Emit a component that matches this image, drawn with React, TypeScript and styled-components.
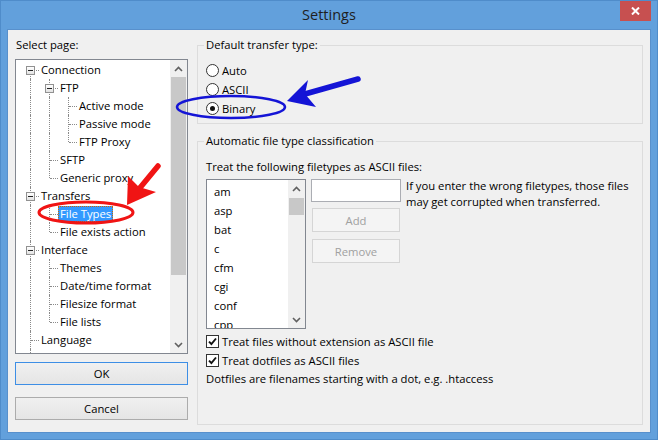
import React from 'react';
import styled, { createGlobalStyle, css } from 'styled-components';

const FONT = `"Open Sans", "Noto Sans", "DejaVu Sans", sans-serif`;

const GlobalStyle = createGlobalStyle`
  html, body { margin: 0; padding: 0; }
  body { background: #62a0dc; font-family: ${FONT}; font-size: 11.25px; color: #000; }
  * { box-sizing: border-box; }
`;

const Window = styled.div`
  position: relative;
  width: 658px;
  height: 440px;
  background: #62a0dc;
  display: flex;
  flex-direction: column;
  box-shadow: inset 0 0 0 1px #4f8cca;
  overflow: hidden;
`;

const TitleBar = styled.div`
  height: 30px;
  flex: none;
  display: grid;
  grid-template-columns: 1fr auto 1fr;
`;

const Title = styled.div`
  grid-column: 2;
  align-self: center;
  font-size: 14.5px;
  line-height: 20px;
  color: #1e1e1e;
  margin-top: -1px;
`;

const CloseButton = styled.div`
  grid-column: 3;
  justify-self: end;
  align-self: start;
  width: 31px;
  height: 20px;
  margin: 1px 7px 0 0;
  background: #c75050;
  display: flex;
  align-items: center;
  justify-content: center;
`;

const Client = styled.div`
  flex: 1;
  margin: 0 8px 8px;
  background: #f0f0f0;
  display: flex;
  gap: 9px;
  padding: 6px 7px 7px;
  box-shadow: 0 0 0 1px #5890cc;
`;

const LeftPane = styled.div`
  width: 173px;
  flex: none;
  display: flex;
  flex-direction: column;
  padding-bottom: 5px;
`;

const PaneLabel = styled.div`
  height: 16px;
  line-height: 16px;
  margin: 1px 0 6px;
  padding-left: 1px;
`;

const TreeBox = styled.div`
  height: 295px;
  flex: none;
  border: 1px solid #828790;
  background: #fff;
  display: flex;
  overflow: hidden;
`;

const TreeItems = styled.div`
  flex: 1;
  padding: 1px 0 0 7px;
  overflow: hidden;
`;

const TreeRow = styled.div`
  display: flex;
  height: 18px;
`;

const TreeTail = styled.div`
  height: 18px;
  width: 16px;
  position: relative;
  &::before {
    content: '';
    position: absolute;
    left: 7px;
    top: 0;
    bottom: 0;
    border-left: 1px dotted #8a8a8a;
  }
`;

const dotted = '1px dotted #8a8a8a';

const Guide = styled.div<{ $line: boolean }>`
  width: 19px;
  flex: none;
  position: relative;
  ${(p) =>
    p.$line &&
    css`
      &::before {
        content: '';
        position: absolute;
        left: 7px;
        top: 0;
        bottom: 0;
        border-left: ${dotted};
      }
    `}
`;

const Elbow = styled.div<{ $top: boolean; $bottom: boolean }>`
  width: 16px;
  flex: none;
  position: relative;
  &::before {
    content: '';
    position: absolute;
    left: 7px;
    top: ${(p) => (p.$top ? '0' : '9px')};
    bottom: ${(p) => (p.$bottom ? '0' : '9px')};
    border-left: ${dotted};
  }
  &::after {
    content: '';
    position: absolute;
    left: 8px;
    right: 0;
    top: 9px;
    border-top: ${dotted};
  }
`;

const Expander = styled.span`
  position: absolute;
  z-index: 1;
  left: 3px;
  top: 5px;
  width: 9px;
  height: 9px;
  border: 1px solid #919191;
  background: linear-gradient(#ffffff, #e2e2e2);
  &::after {
    content: '';
    position: absolute;
    left: 1px;
    top: 3px;
    width: 5px;
    height: 1px;
    background: #222;
  }
`;

const NodeLabel = styled.span<{ $selected?: boolean }>`
  height: 16px;
  line-height: 16px;
  margin-top: 1px;
  padding: 0 2px;
  white-space: nowrap;
  ${(p) =>
    p.$selected &&
    css`
      background: #3399ff;
      color: #fff;
      outline: 1px dotted #cc6600;
      outline-offset: -1px;
    `}
`;

const ScrollBar = styled.div`
  width: 17px;
  flex: none;
  background: #f0f0f0;
  display: flex;
  flex-direction: column;
`;

const ScrollArrow = styled.div`
  height: 17px;
  flex: none;
  display: flex;
  align-items: center;
  justify-content: center;
`;

const ScrollTrack = styled.div`
  flex: 1;
  display: flex;
  flex-direction: column;
`;

const ScrollThumb = styled.div<{ $size: number; $offset: number }>`
  height: ${(p) => p.$size}px;
  margin: ${(p) => p.$offset}px 1px 0 1px;
  background: #c8c8c8;
`;

const Button = styled.button<{ $default?: boolean }>`
  display: block;
  width: 100%;
  height: 23px;
  margin: 0;
  padding: 0;
  font: inherit;
  color: #000;
  border: 1px solid ${(p) => (p.$default ? '#3d8ee5' : '#acacac')};
  background: linear-gradient(#f0f0f0, #e5e5e5);
`;

const OkButton = styled(Button)`
  margin-top: 8px;
`;

const CancelButton = styled(Button)`
  margin-top: 12px;
`;

const RightPane = styled.div`
  flex: 1;
  min-width: 0;
  display: flex;
  flex-direction: column;
  padding-top: 1px;
`;

const Group = styled.fieldset<{ $grow?: boolean }>`
  margin: 0;
  min-width: 0;
  border: 1px solid #dcdcdc;
  padding: 8px 8px 5px;
  ${(p) =>
    p.$grow &&
    css`
      flex: 1;
      margin-top: 9px;
      padding-top: 10px;
    `}
`;

const GroupTitle = styled.legend`
  padding: 0 2px;
  margin-left: -2px;
  height: 16px;
  line-height: 16px;
`;

const OptionRow = styled.div`
  display: flex;
  align-items: center;
  height: 19px;
  gap: 3px;
  white-space: nowrap;
`;

const OptionText = styled.span`
  line-height: 16px;
  height: 16px;
`;

const RadioMark = styled.span<{ $checked?: boolean }>`
  width: 13px;
  height: 13px;
  flex: none;
  border-radius: 50%;
  border: 1px solid #333;
  background: #fff;
  display: flex;
  align-items: center;
  justify-content: center;
  ${(p) =>
    p.$checked &&
    css`
      &::after {
        content: '';
        width: 5px;
        height: 5px;
        border-radius: 50%;
        background: #111;
      }
    `}
`;

const CheckMark = styled.span`
  width: 13px;
  height: 13px;
  flex: none;
  border: 1px solid #333;
  background: #fff;
  display: flex;
  align-items: center;
  justify-content: center;
`;

const TextLine = styled.div<{ $gap?: number }>`
  height: 16px;
  line-height: 16px;
  white-space: nowrap;
  margin-top: ${(p) => p.$gap ?? 0}px;
`;

const FileRow = styled.div`
  display: flex;
  gap: 5px;
  margin-top: 4px;
`;

const ListBox = styled.div`
  width: 100px;
  height: 150px;
  flex: none;
  border: 1px solid #828790;
  background: #fff;
  display: flex;
  overflow: hidden;
`;

const ListItems = styled.div`
  flex: 1;
  padding: 2px 0 0 7px;
  overflow: hidden;
`;

const ListItem = styled.div`
  height: 19px;
  line-height: 19px;
`;

const SideColumn = styled.div`
  width: 90px;
  flex: none;
  display: flex;
  flex-direction: column;
`;

const TextInput = styled.input`
  width: 90px;
  height: 23px;
  margin: 0;
  padding: 0 3px;
  border: 1px solid #abadb3;
  background: #fff;
  font: inherit;
  outline: none;
`;

const SideButton = styled.button<{ $gap: number }>`
  height: 24px;
  margin: ${(p) => p.$gap}px 1px 0;
  padding: 0;
  font: inherit;
  color: #a0a0a0;
  border: 1px solid #d5d5d5;
  background: #f4f4f4;
`;

const Hint = styled.div`
  flex: 1;
  line-height: 16px;
  margin-top: -1px;
`;

const ChecksBlock = styled.div`
  margin-top: 3px;
`;

const Overlay = styled.svg`
  position: absolute;
  left: 0;
  top: 0;
  width: 658px;
  height: 440px;
  pointer-events: none;
`;

const ChevronUp = () => (
  <svg width="9" height="6" viewBox="0 0 9 6">
    <path d="M1 5 L4.5 1.5 L8 5" fill="none" stroke="#606060" strokeWidth="1.6" />
  </svg>
);

const ChevronDown = () => (
  <svg width="9" height="6" viewBox="0 0 9 6">
    <path d="M1 1 L4.5 4.5 L8 1" fill="none" stroke="#606060" strokeWidth="1.6" />
  </svg>
);

type Node = {
  label: string;
  guides: boolean[];
  top: boolean;
  bottom: boolean;
  expander?: boolean;
  selected?: boolean;
};

const nodes: Node[] = [
  { label: 'Connection', guides: [], top: false, bottom: true, expander: true },
  { label: 'FTP', guides: [true], top: true, bottom: true, expander: true },
  { label: 'Active mode', guides: [true, true], top: true, bottom: true },
  { label: 'Passive mode', guides: [true, true], top: true, bottom: true },
  { label: 'FTP Proxy', guides: [true, true], top: true, bottom: false },
  { label: 'SFTP', guides: [true], top: true, bottom: true },
  { label: 'Generic proxy', guides: [true], top: true, bottom: false },
  { label: 'Transfers', guides: [], top: true, bottom: true, expander: true },
  { label: 'File Types', guides: [true], top: true, bottom: true, selected: true },
  { label: 'File exists action', guides: [true], top: true, bottom: false },
  { label: 'Interface', guides: [], top: true, bottom: true, expander: true },
  { label: 'Themes', guides: [true], top: true, bottom: true },
  { label: 'Date/time format', guides: [true], top: true, bottom: true },
  { label: 'Filesize format', guides: [true], top: true, bottom: true },
  { label: 'File lists', guides: [true], top: true, bottom: false },
  { label: 'Language', guides: [], top: true, bottom: true },
];

const fileTypes = ['am', 'asp', 'bat', 'c', 'cfm', 'cgi', 'conf', 'cpp'];

const Radio = ({ label, checked }: { label: string; checked?: boolean }) => (
  <OptionRow>
    <RadioMark $checked={checked} />
    <OptionText>{label}</OptionText>
  </OptionRow>
);

const Check = ({ label }: { label: string }) => (
  <OptionRow>
    <CheckMark>
      <svg width="9" height="9" viewBox="0 0 9 9">
        <path d="M1 4.6 L3.4 7 L8 1.5" fill="none" stroke="#111" strokeWidth="1.9" />
      </svg>
    </CheckMark>
    <OptionText>{label}</OptionText>
  </OptionRow>
);

export default function App() {
  return (
    <>
      <GlobalStyle />
      <Window>
        <TitleBar>
          <Title>Settings</Title>
          <CloseButton>
            <svg width="9" height="8" viewBox="0 0 9 8">
              <path d="M1 0.5 L8 7.5 M8 0.5 L1 7.5" stroke="#fff" strokeWidth="2" />
            </svg>
          </CloseButton>
        </TitleBar>
        <Client>
          <LeftPane>
            <PaneLabel>Select page:</PaneLabel>
            <TreeBox>
              <TreeItems>
                {nodes.map((n) => (
                  <TreeRow key={n.label}>
                    {n.guides.map((g, i) => (
                      <Guide key={i} $line={g} />
                    ))}
                    <Elbow $top={n.top} $bottom={n.bottom}>
                      {n.expander && <Expander />}
                    </Elbow>
                    <NodeLabel $selected={n.selected}>{n.label}</NodeLabel>
                  </TreeRow>
                ))}
                <TreeTail />
              </TreeItems>
              <ScrollBar>
                <ScrollArrow>
                  <ChevronUp />
                </ScrollArrow>
                <ScrollTrack>
                  <ScrollThumb $size={198} $offset={0} />
                </ScrollTrack>
                <ScrollArrow>
                  <ChevronDown />
                </ScrollArrow>
              </ScrollBar>
            </TreeBox>
            <OkButton $default>OK</OkButton>
            <CancelButton>Cancel</CancelButton>
          </LeftPane>
          <RightPane>
            <Group>
              <GroupTitle>Default transfer type:</GroupTitle>
              <Radio label="Auto" />
              <Radio label="ASCII" />
              <Radio label="Binary" checked />
            </Group>
            <Group $grow>
              <GroupTitle>Automatic file type classification</GroupTitle>
              <TextLine>Treat the following filetypes as ASCII files:</TextLine>
              <FileRow>
                <ListBox>
                  <ListItems>
                    {fileTypes.map((t) => (
                      <ListItem key={t}>{t}</ListItem>
                    ))}
                  </ListItems>
                  <ScrollBar>
                    <ScrollArrow>
                      <ChevronUp />
                    </ScrollArrow>
                    <ScrollTrack>
                      <ScrollThumb $size={17} $offset={1} />
                    </ScrollTrack>
                    <ScrollArrow>
                      <ChevronDown />
                    </ScrollArrow>
                  </ScrollBar>
                </ListBox>
                <SideColumn>
                  <TextInput defaultValue="" />
                  <SideButton $gap={6} disabled>
                    Add
                  </SideButton>
                  <SideButton $gap={7} disabled>
                    Remove
                  </SideButton>
                </SideColumn>
                <Hint>
                  If you enter the wrong filetypes, those files
                  <br />
                  may get corrupted when transferred.
                </Hint>
              </FileRow>
              <ChecksBlock>
                <Check label="Treat files without extension as ASCII file" />
                <Check label="Treat dotfiles as ASCII files" />
              </ChecksBlock>
              <TextLine $gap={1}>Dotfiles are filenames starting with a dot, e.g. .htaccess</TextLine>
            </Group>
          </RightPane>
        </Client>
        <Overlay viewBox="0 0 658 440">
          <ellipse cx="86" cy="212.5" rx="47" ry="10.5" fill="none" stroke="#f01414" strokeWidth="3" />
          <line x1="158" y1="166" x2="139" y2="189" stroke="#f01414" strokeWidth="5.5" strokeLinecap="round" />
          <polygon points="127,205 128,176 139,187 156,192" fill="#f01414" />
          <ellipse cx="231" cy="107" rx="54" ry="11" fill="none" stroke="#1414d6" strokeWidth="2.5" />
          <line x1="305" y1="94" x2="358" y2="79" stroke="#1414d6" strokeWidth="5.5" strokeLinecap="round" />
          <polygon points="287,101 308,80 305,94 316,107" fill="#1414d6" />
        </Overlay>
      </Window>
    </>
  );
}
